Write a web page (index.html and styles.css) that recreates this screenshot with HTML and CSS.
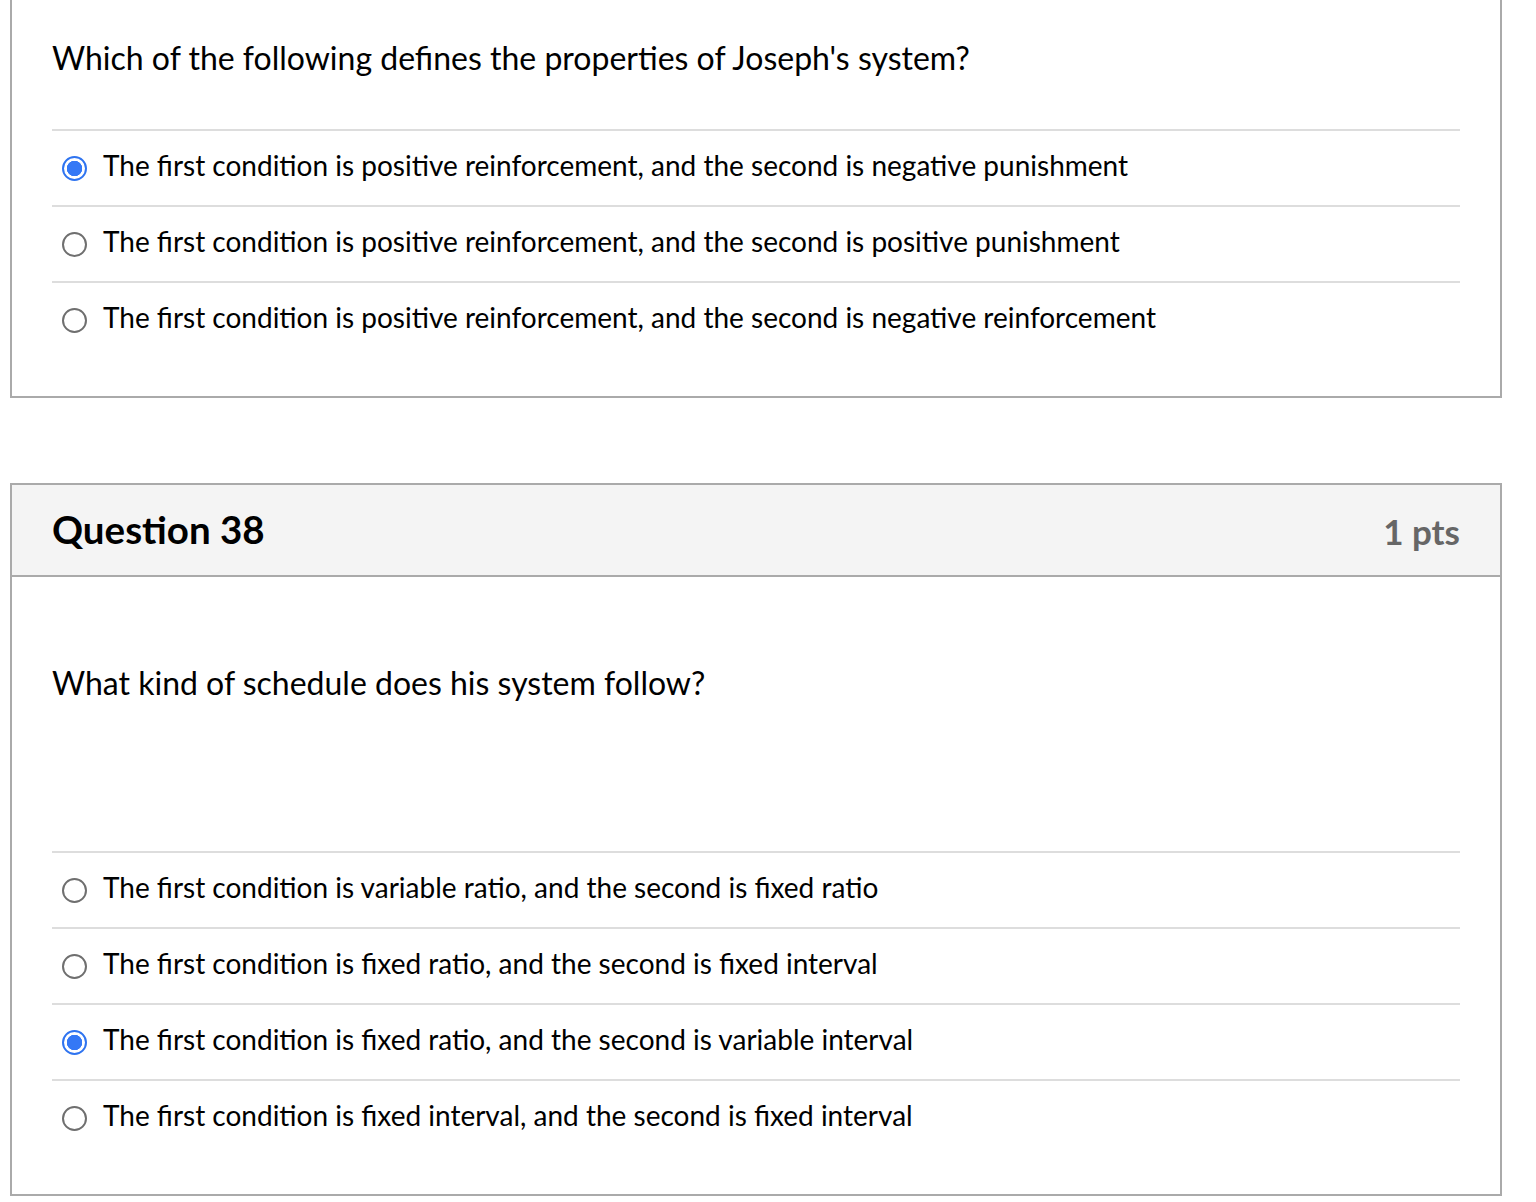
FILE: index.html
```html
<!DOCTYPE html>
<html lang="en">
<head>
<meta charset="utf-8">
<title>Quiz</title>
<link rel="stylesheet" href="styles.css">
</head>
<body>
<section class="card card-cut">
  <div class="q-text q-text-first">Which of the following defines the properties of Joseph's system?</div>
  <div class="answers">
    <label class="answer"><span class="radio checked"></span><span class="a-text">The first condition is positive reinforcement, and the second is negative punishment</span></label>
    <label class="answer"><span class="radio"></span><span class="a-text">The first condition is positive reinforcement, and the second is positive punishment</span></label>
    <label class="answer"><span class="radio"></span><span class="a-text">The first condition is positive reinforcement, and the second is negative reinforcement</span></label>
  </div>
</section>
<section class="card card-full">
  <header class="card-head">
    <h2 class="q-title">Question 38</h2>
    <span class="q-pts">1 pts</span>
  </header>
  <div class="q-text q-text-second">What kind of schedule does his system follow?</div>
  <div class="answers">
    <label class="answer"><span class="radio"></span><span class="a-text">The first condition is variable ratio, and the second is fixed ratio</span></label>
    <label class="answer"><span class="radio"></span><span class="a-text">The first condition is fixed ratio, and the second is fixed interval</span></label>
    <label class="answer"><span class="radio checked"></span><span class="a-text">The first condition is fixed ratio, and the second is variable interval</span></label>
    <label class="answer"><span class="radio"></span><span class="a-text">The first condition is fixed interval, and the second is fixed interval</span></label>
  </div>
</section>
</body>
</html>
```
FILE: styles.css
```css
* { box-sizing: border-box; }
html, body { margin: 0; padding: 0; background: #fff; }
body {
  font-family: Lato, "Open Sans", "Liberation Sans", sans-serif;
  color: #000;
  padding-left: 10px;
}
.card {
  width: 1492px;
  border: 2px solid #aaa;
  background: #fff;
  padding-bottom: 39px;
}
.card-cut {
  border-top: none;
}
.card-full {
  margin-top: 85px;
}
.card-head {
  display: flex;
  align-items: center;
  justify-content: space-between;
  height: 92px;
  padding: 0 40px 0 40px;
  background: #f4f4f4;
  border-bottom: 2px solid #aaa;
}
.q-title {
  margin: 0;
  font-size: 38.5px;
  font-weight: 700;
  color: #000;
  padding-bottom: 3px;
}
.q-pts {
  font-size: 35px;
  font-weight: 700;
  color: #666;
  padding-top: 2px;
}
.q-text {
  font-size: 32px;
  line-height: 40px;
  padding: 0 40px;
}
.q-text-first {
  padding-top: 38px;
  margin-bottom: 51px;
}
.q-text-second {
  padding-top: 86px;
  margin-bottom: 148px;
}
.answers {
  padding: 0 40px;
}
.answer {
  display: flex;
  align-items: center;
  height: 76px;
  border-top: 2px solid #ddd;
  padding-left: 10px;
}
.radio {
  flex: 0 0 25px;
  width: 25px;
  height: 25px;
  border-radius: 50%;
  border: 2px solid #6f6f6f;
  background: #fff;
  margin-right: 16px;
}
.radio.checked {
  border: 2.5px solid #2f74f0;
  background: radial-gradient(circle, #3478f6 0 7.5px, #fff 8px);
}
.a-text {
  font-size: 28px;
  line-height: 40px;
  color: #000;
  padding-bottom: 6px;
}
```
